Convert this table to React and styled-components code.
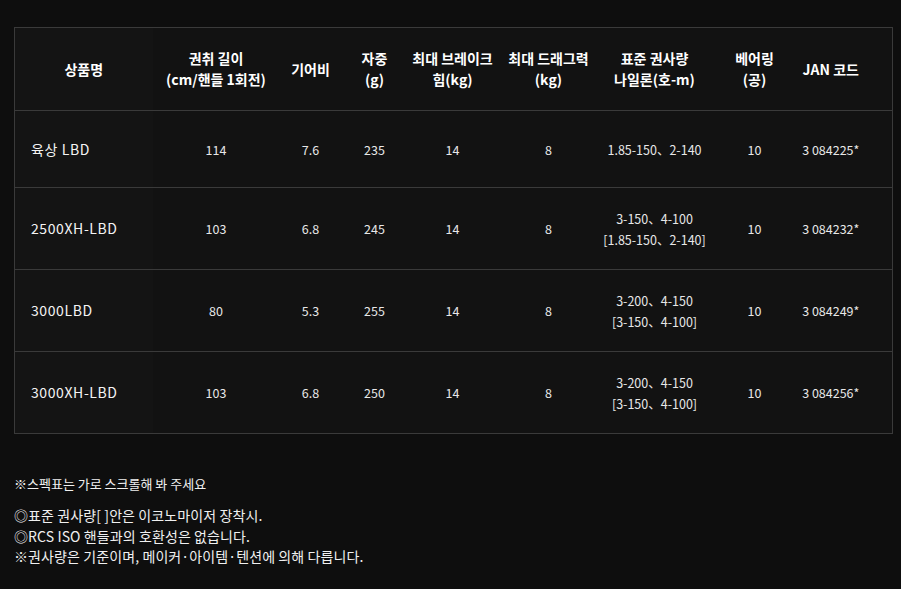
import React from "react";
import styled, { createGlobalStyle } from "styled-components";

const GlobalStyle = createGlobalStyle`
  body {
    margin: 0;
    background: #0e0e0e;
    font-family: "Noto Sans CJK KR", "Noto Sans", sans-serif;
  }
`;

const specs = [
  { name: "육상 LBD", length: "114", gear: "7.6", weight: "235", brake: "14", drag: "8", line: ["1.85-150、2-140"], bearing: "10", jan: "3 084225*" },
  { name: "2500XH-LBD", length: "103", gear: "6.8", weight: "245", brake: "14", drag: "8", line: ["3-150、4-100", "[1.85-150、2-140]"], bearing: "10", jan: "3 084232*" },
  { name: "3000LBD", length: "80", gear: "5.3", weight: "255", brake: "14", drag: "8", line: ["3-200、4-150", "[3-150、4-100]"], bearing: "10", jan: "3 084249*" },
  { name: "3000XH-LBD", length: "103", gear: "6.8", weight: "250", brake: "14", drag: "8", line: ["3-200、4-150", "[3-150、4-100]"], bearing: "10", jan: "3 084256*" },
];

const headers = [
  ["상품명"],
  ["권취 길이", "(cm/핸들 1회전)"],
  ["기어비"],
  ["자중", "(g)"],
  ["최대 브레이크", "힘(kg)"],
  ["최대 드래그력", "(kg)"],
  ["표준 권사량", "나일론(호-m)"],
  ["베어링", "(공)"],
  ["JAN 코드"],
];

const widths = [138, 127, 62, 66, 90, 102, 110, 90, 93];

const App = () => {
  return (
    <Page>
      <GlobalStyle />
      <SpecTable>
        <colgroup>
          {widths.map((w, i) => (
            <col key={i} style={{ width: w }} />
          ))}
        </colgroup>
        <thead>
          <tr>
            {headers.map((h, i) => (
              <HeadCell key={i} $first={i === 0} $last={i === headers.length - 1}>
                {h.map((l, j) => (
                  <div key={j}>{l}</div>
                ))}
              </HeadCell>
            ))}
          </tr>
        </thead>
        <tbody>
          {specs.map((s) => (
            <tr key={s.name}>
              <NameCell>{s.name}</NameCell>
              <Cell>{s.length}</Cell>
              <Cell>{s.gear}</Cell>
              <Cell>{s.weight}</Cell>
              <Cell>{s.brake}</Cell>
              <Cell>{s.drag}</Cell>
              <Cell>
                {s.line.map((l, j) => (
                  <div key={j}>{l}</div>
                ))}
              </Cell>
              <Cell>{s.bearing}</Cell>
              <Cell $last>{s.jan}</Cell>
            </tr>
          ))}
        </tbody>
      </SpecTable>

      <ScrollNote>※스펙표는 가로 스크롤해 봐 주세요</ScrollNote>
      <Notes>
        <div>◎표준 권사량[ ]안은 이코노마이저 장착시.</div>
        <div>◎RCS ISO 핸들과의 호환성은 없습니다.</div>
        <div>※권사량은 기준이며, 메이커·아이템·텐션에 의해 다릅니다.</div>
      </Notes>
    </Page>
  );
};

const Page = styled.div`
  padding: 27px 9px 20px 14px;
  color: #f2f2f2;
`;

const SpecTable = styled.table`
  width: 878px;
  table-layout: fixed;
  border-collapse: collapse;
  background: #121212;
  border: 1px solid #3a3a3a;
`;

const HeadCell = styled.th`
  height: 83px;
  padding: 0 2px;
  padding-right: ${(p) => (p.$last ? "32px" : "2px")};
  box-sizing: border-box;
  font-size: 14px;
  font-weight: 700;
  line-height: 21px;
  color: #ffffff;
  text-align: center;
  vertical-align: middle;
  background: ${(p) => (p.$first ? "#141414" : "#121212")};
  border-bottom: 1px solid #3a3a3a;
  white-space: nowrap;
`;

const Cell = styled.td`
  height: 77px;
  padding: 19.5px 2px;
  padding-right: ${(p) => (p.$last ? "32px" : "2px")};
  box-sizing: border-box;
  font-size: 12.5px;
  line-height: 21px;
  color: #e8e8e8;
  text-align: center;
  vertical-align: middle;
  border-bottom: 1px solid #3a3a3a;
  white-space: nowrap;
`;

const NameCell = styled(Cell)`
  padding-left: 16px;
  text-align: left;
  font-size: 14px;
  letter-spacing: 0.6px;
  color: #f4f4f4;
  background: #141414;
`;

const ScrollNote = styled.div`
  margin-top: 41px;
  font-size: 13px;
  line-height: 18px;
  color: #f0f0f0;
`;

const Notes = styled.div`
  margin-top: 12px;
  font-size: 14px;
  letter-spacing: 0.1px;
  line-height: 20.5px;
  color: #f0f0f0;
`;

export default App;
